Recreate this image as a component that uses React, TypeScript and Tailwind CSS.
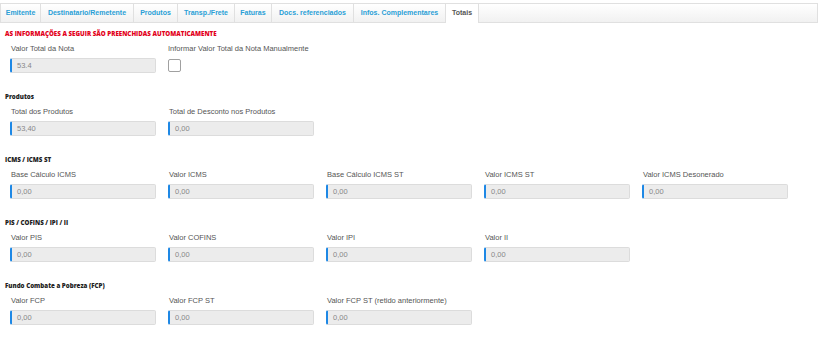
import React from "react";

interface Field {
  label: string;
  value: string;
}

interface Section {
  title: string;
  fields: Field[];
}

const tabs = [
  { label: "Emitente", w: "w-[40px]" },
  { label: "Destinatario/Remetente", w: "w-[93px]" },
  { label: "Produtos", w: "w-[44px]" },
  { label: "Transp./Frete", w: "w-[57px]" },
  { label: "Faturas", w: "w-[37px]" },
  { label: "Docs. referenciados", w: "w-[82px]" },
  { label: "Infos. Complementares", w: "w-[92px]" },
];

const sections: Section[] = [
  {
    title: "Produtos",
    fields: [
      { label: "Total dos Produtos", value: "53,40" },
      { label: "Total de Desconto nos Produtos", value: "0,00" },
    ],
  },
  {
    title: "ICMS / ICMS ST",
    fields: [
      { label: "Base Cálculo ICMS", value: "0,00" },
      { label: "Valor ICMS", value: "0,00" },
      { label: "Base Cálculo ICMS ST", value: "0,00" },
      { label: "Valor ICMS ST", value: "0,00" },
      { label: "Valor ICMS Desonerado", value: "0,00" },
    ],
  },
  {
    title: "PIS / COFINS / IPI / II",
    fields: [
      { label: "Valor PIS", value: "0,00" },
      { label: "Valor COFINS", value: "0,00" },
      { label: "Valor IPI", value: "0,00" },
      { label: "Valor II", value: "0,00" },
    ],
  },
  {
    title: "Fundo Combate a Pobreza (FCP)",
    fields: [
      { label: "Valor FCP", value: "0,00" },
      { label: "Valor FCP ST", value: "0,00" },
      { label: "Valor FCP ST (retido anteriormente)", value: "0,00" },
    ],
  },
];

function ReadOnlyInput({ value }: { value: string }) {
  return (
    <div className="h-[15px] w-[146px] bg-[#ececec] border border-[#dcdcdc] border-l-2 border-l-[#1e88e5] rounded-[2px] flex items-center pl-[5px] text-[7.5px] text-[#888]">
      {value}
    </div>
  );
}

function FieldBox({ label, value }: Field) {
  return (
    <div className="flex flex-col">
      <div className="h-[10px] leading-[10px] pl-[1px] text-[7.5px] text-[#555] whitespace-nowrap">
        {label}
      </div>
      <div className="mt-[4px]">
        <ReadOnlyInput value={value} />
      </div>
    </div>
  );
}

export default function App() {
  return (
    <div
      className="w-[828px] h-[343px] bg-white overflow-hidden"
      style={{ fontFamily: "'Liberation Sans', Arial, sans-serif" }}
    >
      {/* Tab bar */}
      <div className="pt-[3px] w-[818px]">
        <div className="flex h-[20px] border border-[#e0e0e0] bg-gradient-to-b from-white to-[#f1f1f1]">
          {tabs.map((t) => (
            <div
              key={t.label}
              className={`${t.w} shrink-0 flex items-center justify-center border-r border-[#e0e0e0] text-[7px] font-bold text-[#2a9fd6] whitespace-nowrap`}
            >
              {t.label}
            </div>
          ))}
          <div className="w-[33px] shrink-0 flex items-center justify-center border-r border-[#e0e0e0] bg-white -mb-[1px] text-[7px] font-bold text-[#555]">
            Totais
          </div>
        </div>
      </div>

      <div className="pl-[10px] pt-[6px]">
        {/* Auto-filled info */}
        <div
          className="h-[10px] leading-[10px] -ml-[5px] text-[6.2px] font-extrabold text-[#e2001a] whitespace-nowrap"
          style={{ fontFamily: "'Open Sans', sans-serif" }}
        >
          AS INFORMAÇÕES A SEGUIR SÃO PREENCHIDAS AUTOMATICAMENTE
        </div>
        <div className="mt-[5px] grid grid-cols-[146px_146px] gap-x-[12px]">
          <FieldBox label="Valor Total da Nota" value="53.4" />
          <div className="flex flex-col">
            <div className="h-[10px] leading-[10px] text-[7.5px] text-[#555] whitespace-nowrap">
              Informar Valor Total da Nota Manualmente
            </div>
            <div className="mt-[5px] w-[13px] h-[13px] border border-[#a0a0a0] rounded-[2px] bg-white" />
          </div>
        </div>

        {sections.map((s) => (
          <div key={s.title} className="mt-[19px]">
            <div
              className="h-[10px] leading-[10px] -ml-[5px] text-[6.2px] font-extrabold text-[#222] whitespace-nowrap"
              style={{ fontFamily: "'Open Sans', sans-serif" }}
            >
              {s.title}
            </div>
            <div className="mt-[5px] grid grid-cols-[repeat(5,146px)] gap-x-[12px]">
              {s.fields.map((f) => (
                <FieldBox key={f.label} label={f.label} value={f.value} />
              ))}
            </div>
          </div>
        ))}
      </div>
    </div>
  );
}
